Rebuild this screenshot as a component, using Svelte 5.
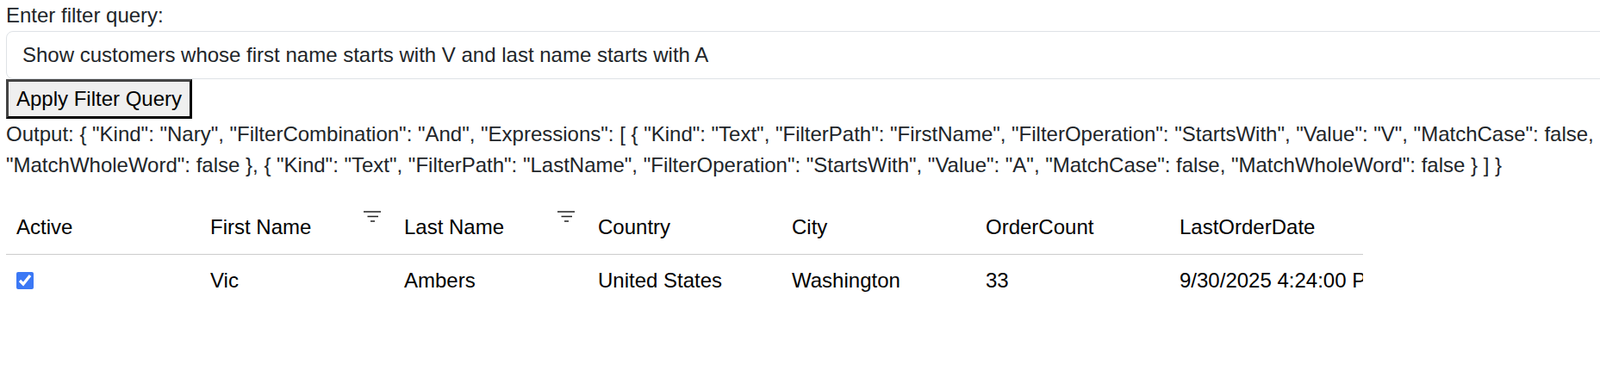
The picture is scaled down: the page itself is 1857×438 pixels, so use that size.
<script>
  const columns = [
    { label: 'Active' },
    { label: 'First Name', filter: true },
    { label: 'Last Name', filter: true },
    { label: 'Country' },
    { label: 'City' },
    { label: 'OrderCount' },
    { label: 'LastOrderDate' }
  ];
  const row = ['Vic', 'Ambers', 'United States', 'Washington', '33', '9/30/2025 4:24:00 PM'];
  const query = 'Show customers whose first name starts with V and last name starts with A';
  const output = 'Output: { "Kind": "Nary", "FilterCombination": "And", "Expressions": [ { "Kind": "Text", "FilterPath": "FirstName", "FilterOperation": "StartsWith", "Value": "V", "MatchCase": false, "MatchWholeWord": false }, { "Kind": "Text", "FilterPath": "LastName", "FilterOperation": "StartsWith", "Value": "A", "MatchCase": false, "MatchWholeWord": false } ] }';
</script>

<div class="page">
  <label class="label" for="q">Enter filter query:</label>
  <input id="q" class="query" value={query} />
  <button class="apply">Apply Filter Query</button>
  <div class="output">{output}</div>
  <div class="grid">
    <div class="head">
      {#each columns as c}
        <div class="cell">
          {c.label}
          {#if c.filter}
            <svg class="funnel" viewBox="0 0 20 13" width="20" height="13" aria-hidden="true">
              <path d="M0 1h20M4.5 6.5h12.5M8 12h5" stroke="#222" stroke-width="1.4" fill="none" />
            </svg>
          {/if}
        </div>
      {/each}
    </div>
    <div class="body-row">
      <div class="cell"><input type="checkbox" checked class="check" /></div>
      {#each row as v}
        <div class="cell">{v}</div>
      {/each}
    </div>
  </div>
</div>

<style>
  :global(body) {
    margin: 0;
    background: #fff;
    overflow: hidden;
  }
  .page {
    width: 1857px;
    height: 438px;
    overflow: hidden;
    padding: 0 0 0 7px;
    box-sizing: border-box;
    font-family: "Liberation Sans", Arial, sans-serif;
    font-size: 24px;
    line-height: 36px;
    color: #212529;
  }
  .label {
    display: block;
    height: 36px;
  }
  .query {
    display: block;
    box-sizing: border-box;
    width: 1860px;
    height: 56px;
    padding: 0 18px;
    border: 1px solid #dee2e6;
    border-radius: 8px;
    font: inherit;
    color: #212529;
    outline: none;
  }
  .apply {
    display: block;
    box-sizing: border-box;
    height: 46px;
    padding: 0 9px;
    background: #efefef;
    border: 3px solid #000;
    border-top-color: #444;
    border-left-color: #444;
    font: inherit;
    color: #000;
  }
  .output {
    padding-bottom: 26px;
  }
  .grid {
    width: 1575px;
    color: #000;
    overflow: hidden;
  }
  .head, .body-row {
    display: grid;
    grid-template-columns: repeat(7, 225px);
  }
  .head {
    height: 60px;
    padding-bottom: 3px;
    border-bottom: 1px solid #ccc;
    box-sizing: border-box;
  }
  .body-row {
    height: 60px;
  }
  .cell {
    position: relative;
    display: flex;
    align-items: center;
    padding: 0 12px;
    white-space: nowrap;
    overflow: hidden;
  }
  .funnel {
    position: absolute;
    right: 15px;
    top: 9px;
  }
  .check {
    width: 20px;
    height: 20px;
    margin: 0;
    accent-color: #3b78f5;
  }
</style>
